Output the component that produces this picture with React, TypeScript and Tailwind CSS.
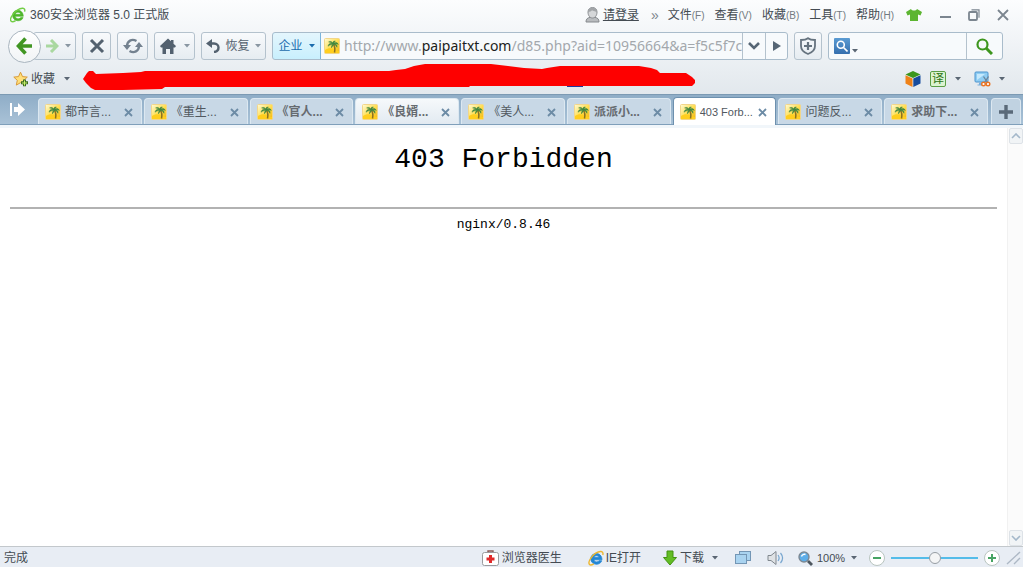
import React, { useState } from 'react';

const menus = [
  { label: '文件', key: 'F' },
  { label: '查看', key: 'V' },
  { label: '收藏', key: 'B' },
  { label: '工具', key: 'T' },
  { label: '帮助', key: 'H' },
];

interface Tab {
  title: string;
  state?: 'active' | 'hover';
  unread?: boolean;
}

const tabs: Tab[] = [
  { title: '都市言...' },
  { title: '《重生...' },
  { title: '《官人...', unread: true },
  { title: '《良婿...', unread: true, state: 'hover' },
  { title: '《美人...' },
  { title: '派派小...', unread: true },
  { title: '403 Forb...', state: 'active' },
  { title: '问题反...' },
  { title: '求助下...', unread: true },
];

const toolButton =
  'flex h-7 shrink-0 items-center justify-center rounded-[3px] border border-[#b4c2cd] bg-linear-to-b from-[#f8fafc] to-[#e6ecf1] text-[#53616f]';

const Caret = ({ className = 'text-[#5a6673]' }: { className?: string }) => (
  <svg className={`shrink-0 ${className}`} width="6" height="4" viewBox="0 0 6 4" fill="currentColor" aria-hidden="true">
    <path d="M0 0h6L3 3.6z" />
  </svg>
);

const PalmIcon = () => (
  <svg className="shrink-0" width="16" height="16" viewBox="0 0 16 16" aria-hidden="true">
    <defs>
      <linearGradient id="sand" x1="0" y1="0" x2="1" y2="1">
        <stop offset="0" stopColor="#fffbd8" />
        <stop offset=".5" stopColor="#ffdf55" />
        <stop offset="1" stopColor="#f3b50c" />
      </linearGradient>
    </defs>
    <rect x=".5" y=".5" width="15" height="15" rx="1" fill="url(#sand)" stroke="#f2d68a" />
    <path d="M1 12c3-2 6-2 9-1 2 .8 3 2 5 2v2H1z" fill="#ffce1f" />
    <path d="M9.4 6c1.600 2.500 1.800 5 1.100 8.500" fill="none" stroke="#8a7224" strokeWidth="1.500" />
    <path d="M9 5.800C6.500 4.500 4.600 5.800 4 8.200c1.700-1.200 3.200-1.500 5-2.100-1 1-1.700 2-1.600 3.700C8.500 8.600 9.200 7.500 9.500 6.200c1.500.4 2.600 1.400 3.500 3.100.5-2-.6-3.300-2.300-3.600 1.300-.2 2.500 0 3.600.8-.5-2-2.600-2.500-4.500-1.400.2-.9.800-1.500 1.600-1.900C9.700 2.700 8.900 3.600 8.900 5 7.900 3.400 6.100 2.900 4.600 3.900 6.400 4.100 7.800 4.700 9 5.800z" fill="#3f8741" stroke="#3f8741" strokeWidth=".5" />
  </svg>
);

const BrowserLogo = () => (
  <svg width="16" height="16" viewBox="0 0 16 16" fill="none" aria-hidden="true">
    <path d="M13.300 9.300H5.200c.2 2.700 4.300 3.200 5.400 1.300h2.500C11.500 15.500 2.600 14.800 2.600 8.300c0-6.500 10.500-7.200 10.700 1zM5.300 7.300h5.300c-.3-2.700-4.700-2.900-5.300 0z" fill="#4eb62b" stroke="#4eb62b" strokeWidth=".6" />
    <path d="M14.600 4.600C15.900.2 11 .6 7.400 3 2.300 6.500-.8 12.400 1.200 14.300c.9.9 2.800.3 4.400-.7" stroke="#72ce45" strokeWidth="1.400" />
  </svg>
);

const UserIcon = () => (
  <svg width="15" height="16" viewBox="0 0 15 16" aria-hidden="true">
    <path d="M1 15c0-3 1.500-4.200 4-4.600h5c2.500.4 4 1.600 4 4.600z" fill="#b9bcbf" stroke="#85898d" />
    <path d="M3 5c0-6 9-6 9 0 0 8-9 8-9 0z" fill="#d5d7d9" stroke="#898c90" />
    <path d="M3 5C3-1 12-1 12 5 9.500 4.500 8 3.600 7 3.200 6.200 4.200 5 4.700 3 5z" fill="#a2a5a8" />
  </svg>
);

const ShirtIcon = () => (
  <svg width="16" height="14" viewBox="0 0 16 14" aria-hidden="true">
    <path d="M5 1 0 4l1.500 3.500L4 6.500V13h8V6.500l2.500 1L16 4l-5-3C10 3 6 3 5 1z" fill="#5cb531" />
  </svg>
);

const StarIcon = () => (
  <svg width="16" height="16" viewBox="0 0 16 16" aria-hidden="true">
    <path d="m7.500 1.200 2 4.400 4.800.5-3.600 3.200 1.100 4.800-4.300-2.400-4.200 2.400 1-4.800L.8 6.100l4.700-.5z" fill="#ffdf7a" stroke="#d99b3a" strokeLinejoin="round" />
    <path d="M10 8.500h3V10.300h2v3h-2v2h-3v-2H8v-3h2z" fill="#3d6e20" />
    <path d="M11 9.500h1v2h2v1h-2v2h-1v-2H9v-1h2z" fill="#c9f06a" />
  </svg>
);

const CubeIcon = () => (
  <svg width="16" height="16" viewBox="0 0 16 16" aria-hidden="true">
    <path d="M8 0 15.500 3.500 8 7 .5 3.500z" fill="#3c961c" />
    <path d="M.5 4.200 7.500 7.500V16l-7-3.500z" fill="#ef8218" />
    <path d="M15.500 4.200 8.300 7.500V16l7.200-3.500z" fill="#174c9d" />
  </svg>
);

const CaptureIcon = () => (
  <svg width="17" height="16" viewBox="0 0 17 16" aria-hidden="true">
    <rect x="1" y="1" width="13" height="10" rx="1" fill="#8fcdf3" stroke="#4c94ce" />
    <path d="M3 9V3h8z" fill="#c5e9fd" />
    <path d="M5 11.500h4v2h1.500v1h-7v-1H5z" fill="#78aedb" />
    <path d="m9.500 5.500 4 6M14.500 5.500l-4 6" stroke="#6c8499" strokeWidth="1.300" />
    <circle cx="9.500" cy="13" r="1.800" fill="#fff" stroke="#ea7423" strokeWidth="1.400" />
    <circle cx="14" cy="13" r="1.800" fill="#fff" stroke="#ea7423" strokeWidth="1.400" />
  </svg>
);

const IeIcon = () => (
  <svg width="16" height="16" viewBox="0 0 16 16" fill="none" aria-hidden="true">
    <path d="M14 9.800H6c.2 2.500 3.900 2.900 5 1h2.700C12 16 2.800 15.300 2.800 8.800 2.800 2 13.900 1.300 14 9.800zM6 7.600h4.900c-.3-2.300-4.200-2.500-4.900 0z" fill="#2386d4" stroke="#2386d4" strokeWidth=".8" />
    <path d="M14.800 5C15.900.6 11.500.8 7.700 3.200 3 6.300-.4 12.500 1.500 14.400c.9.900 2.700.4 4.200-.6" stroke="#edb72f" strokeWidth="1.400" />
  </svg>
);

const TitleBar = () => (
  <header className="flex h-[30px] items-center pr-[14px] pl-[10px] text-[#444b52]">
    <BrowserLogo />
    <h1 className="ml-1 whitespace-nowrap">360安全浏览器 5.0 正式版</h1>
    <div className="ml-auto flex items-center whitespace-nowrap">
      <UserIcon />
      <a href="#login" className="ml-[3px] underline">请登录</a>
      <span className="mr-[9px] ml-3 text-sm text-[#7c858d]">»</span>
      <nav className="flex gap-[10px]">
        {menus.map((menu) => (
          <button key={menu.key} type="button">
            {menu.label}
            <span className="text-[10px] text-[#737a81]">({menu.key})</span>
          </button>
        ))}
      </nav>
      <button type="button" aria-label="皮肤" className="ml-3"><ShirtIcon /></button>
      <div className="ml-[17px] flex items-center gap-[17px] text-[#7b858f]">
        <button type="button" aria-label="最小化">
          <svg width="12" height="12" viewBox="0 0 12 12"><path d="M1 8h11" stroke="currentColor" strokeWidth="2" /></svg>
        </button>
        <button type="button" aria-label="还原">
          <svg width="12" height="12" viewBox="0 0 12 12" fill="none" stroke="currentColor">
            <rect x="1" y="3" width="8" height="8" rx="1" strokeWidth="1.800" />
            <path d="M3.500.8H11v8" strokeWidth="1.200" />
          </svg>
        </button>
        <button type="button" aria-label="关闭">
          <svg width="12" height="12" viewBox="0 0 12 12"><path d="m1 1 10 10M11 1 1 11" stroke="currentColor" strokeWidth="1.800" /></svg>
        </button>
      </div>
    </div>
  </header>
);

const AddressBar = () => {
  const [editing, setEditing] = useState(false);
  const [url, setUrl] = useState('http://www.paipaitxt.com/d85.php?aid=10956664&a=f5c5f7c');
  const host = 'paipaitxt.com';
  const [before, after] = url.split(host);

  return (
    <div className="flex h-7 min-w-0 flex-1 overflow-hidden rounded-[3px] border border-[#a9bccb] bg-[#f7fafc]">
      <button type="button" className="-my-px -ml-px flex w-[49px] shrink-0 items-center justify-center gap-[6px] rounded-l-[3px] border border-[#7bb5dc] bg-linear-to-b from-[#e4f6fd] to-[#c8effd] text-[#1b6cad]">
        企业
        <Caret className="text-[#1b6cad]" />
      </button>
      <div className="flex min-w-0 flex-1 items-center gap-1 pl-[3px]">
        <PalmIcon />
        <div className="relative h-full min-w-0 flex-1 overflow-hidden font-['Noto_Sans'] text-[14px] leading-[26px] whitespace-nowrap text-[#a3a8ad]">
          {!editing && (
            <span>
              {before}
              {after !== undefined && <span className="text-[#1c1e20]">{host}</span>}
              {after}
            </span>
          )}
          <input
            type="text"
            aria-label="地址"
            className="absolute inset-0 w-full bg-transparent text-[#1c1e20] outline-none"
            value={editing ? url : ''}
            onFocus={() => setEditing(true)}
            onBlur={() => setEditing(false)}
            onChange={(e) => setUrl(e.target.value)}
          />
        </div>
      </div>
      <button type="button" aria-label="历史地址" className="flex w-[23px] shrink-0 items-center justify-center border-l border-[#b4c2cd] text-[#566675]">
        <svg width="12" height="8" viewBox="0 0 12 8" fill="none"><path d="m1 1 5 5 5-5" stroke="currentColor" strokeWidth="2.600" /></svg>
      </button>
      <button type="button" aria-label="转到" className="flex w-[22px] shrink-0 items-center justify-center border-l border-[#b4c2cd] text-[#566675]">
        <svg width="8" height="10" viewBox="0 0 8 10" fill="currentColor"><path d="M0 0v10l8-5z" /></svg>
      </button>
    </div>
  );
};

const Toolbar = () => (
  <div className="flex h-8 items-center gap-[6px] pr-5 pl-2">
    <div className="flex shrink-0 items-center">
      <button type="button" aria-label="后退" className="z-10 flex size-[33px] items-center justify-center rounded-full border border-[#aab6c0] bg-linear-to-b from-white to-[#f1f4f6]">
        <svg width="17" height="18" viewBox="0 0 17 18" fill="none"><path d="M9.500 1.500 2.500 9l7 7.500M3 9h13" stroke="#419623" strokeWidth="3.600" /></svg>
      </button>
      <button type="button" aria-label="前进" className={`${toolButton} -ml-2 w-[43px] gap-[6px] pl-[6px]`}>
        <svg width="14" height="14" viewBox="0 0 14 14" fill="none"><path d="m6 1 6 6-6 6M12 7H1" stroke="#a9d8a0" strokeWidth="3" /></svg>
        <Caret className="text-[#8996a2]" />
      </button>
    </div>
    <button type="button" aria-label="停止" className={`${toolButton} w-[29px]`}>
      <svg width="16" height="16" viewBox="0 0 16 16"><path d="m2 2 12 12M14 2 2 14" stroke="currentColor" strokeWidth="3" /></svg>
    </button>
    <button type="button" aria-label="刷新" className={`${toolButton} w-[31px]`}>
      <svg width="20" height="18" viewBox="0 0 20 18" fill="none">
        <path d="M4 9.500C4 3.500 9 1.500 13.500 4M16 8.500c0 6-5 8-9.500 5.500" stroke="#73818f" strokeWidth="2.400" />
        <path d="M0 8h8l-4 5zM20 10h-8l4-5z" fill="#73818f" />
      </svg>
    </button>
    <button type="button" aria-label="主页" className={`${toolButton} w-[41px] gap-2`}>
      <svg width="16" height="16" viewBox="0 0 16 16" fill="currentColor"><path d="M8 .5 0 8l1 1.500h1.500V16H6v-5h4v5h3.500V9.500H15L16 8l-2.500-2.300V2H11v1.300z" /></svg>
      <Caret className="text-[#8996a2]" />
    </button>
    <button type="button" className={`${toolButton} w-[65px] gap-[5px]`}>
      <svg width="14" height="14" viewBox="0 0 14 14" fill="none">
        <path d="M4 4.500h4c6 0 6 8 0 8.500" stroke="currentColor" strokeWidth="2.400" />
        <path d="M6 0v9L0 4.500z" fill="currentColor" />
      </svg>
      恢复
      <Caret className="text-[#8996a2]" />
    </button>
    <AddressBar />
    <button type="button" aria-label="安全" className={`${toolButton} w-7`}>
      <svg width="18" height="18" viewBox="0 0 18 18" fill="none" stroke="#66737f" strokeWidth="1.800">
        <path d="M9 1.200C7 2.800 4.500 3 2 3v6c0 4 3 6.500 7 8 4-1.500 7-4 7-8V3c-2.500 0-5-.2-7-1.800z" />
        <path d="M9 5v8M5 9h8" strokeWidth="2.200" />
      </svg>
    </button>
    <div className="flex h-7 w-[175px] shrink-0 overflow-hidden rounded-[3px] border border-[#a9bccb] bg-[#f7fafc]">
      <button type="button" aria-label="搜索引擎" className="ml-[5px] flex items-center">
        <span className="flex size-4 items-center justify-center rounded-[1px] bg-linear-to-b from-[#5a9bd3] to-[#356fae]">
          <svg width="12" height="12" viewBox="0 0 12 12" fill="none" stroke="#fff" strokeWidth="1.600"><circle cx="4.800" cy="4.800" r="3.500" /><path d="m7.500 7.500 4 4" /></svg>
        </span>
        <span className="mt-[10px] ml-[2px]"><Caret /></span>
      </button>
      <input type="text" aria-label="搜索" className="min-w-0 flex-1 bg-transparent px-1 outline-none" />
      <button type="button" aria-label="开始搜索" className="flex w-9 items-center justify-center border-l border-[#b4c2cd]">
        <svg width="17" height="17" viewBox="0 0 17 17" fill="none" stroke="#3d961e"><circle cx="6.500" cy="6.500" r="5" strokeWidth="2.200" /><path d="m10 10 6 6" strokeWidth="3" /></svg>
      </button>
    </div>
  </div>
);

const FavoritesBar = () => (
  <div className="flex h-8 items-center pt-px pr-[18px] pl-[13px] text-[#444b52]">
    <button type="button" className="flex items-center gap-[2px]">
      <StarIcon />
      收藏
      <span className="ml-[7px]"><Caret /></span>
    </button>
    <svg className="ml-[13px] shrink-0" width="612" height="29" viewBox="0 0 612 29" aria-hidden="true">
      <path d="M484 20h16v3h-16z" fill="#20389b" />
      <path
        d="M0 15 4 9 6 7H10L13 10 40 9 58 8 62 7H306L313 6 322 5 331 2 342 0H408L425 2 441 4 459 5 464 4 477 2H556L568 4 574 6 577 9H603L609 13 612 16V19L609 22H387L386 23H82L79 25 40 26H12L8 24 3 19z"
        fill="#fe0000"
      />
    </svg>
    <div className="ml-auto flex items-center">
      <button type="button" aria-label="应用"><CubeIcon /></button>
      <button type="button" className="ml-[9px] flex items-center gap-[9px]">
        <span className="flex size-4 items-center justify-center rounded-[2px] border border-[#5c9f47] bg-[#dcf3d0] leading-[14px] text-[#2e7417]">译</span>
        <Caret />
      </button>
      <button type="button" aria-label="截图" className="ml-[13px] flex items-center gap-2">
        <CaptureIcon />
        <Caret />
      </button>
    </div>
  </div>
);

const TabStrip = () => (
  <div className="flex h-[31px] items-end gap-[3px] border-t border-b border-t-[#7c9ab3] border-b-[#7f9fba] bg-linear-to-b from-[#8fadc7] to-[#a9c2d7] pr-[2px]">
    <button type="button" aria-label="标签列表" className="flex h-full w-[35px] items-center justify-center text-white">
      <svg width="16" height="15" viewBox="0 0 16 15" fill="currentColor"><path d="M0 1h2v13H0zM4 5h4V1l7 6.500L8 14v-4H4z" /></svg>
    </button>
    <div className="flex min-w-0 flex-1 items-end gap-[2px]">
      {tabs.map((tab) => (
        <div
          key={tab.title}
          className={`flex min-w-0 flex-1 items-center rounded-t-[4px] border border-b-0 pt-px pr-2 pl-[6px] ${
            tab.state === 'active'
              ? '-mb-px h-[28px] border-[#6d90ae] bg-white'
              : tab.state === 'hover'
              ? 'h-[26px] border-[#dce8f1] bg-linear-to-b from-[#f6f9fb] to-[#e2eaf1]'
              : 'h-[26px] border-[#dce8f1] bg-[#c8d8e6]'
          }`}
        >
          <button
            type="button"
            className={`flex min-w-0 flex-1 items-center gap-1 overflow-hidden whitespace-nowrap ${
              tab.unread ? 'font-bold text-[#666b70]' : 'text-[#51585f]'
            } ${tab.state === 'active' ? 'text-[11px]' : ''}`}
          >
            <PalmIcon />
            {tab.title}
          </button>
          <button type="button" aria-label={`关闭 ${tab.title}`} className="shrink-0 text-[#6c8ba5]">
            <svg width="9" height="9" viewBox="0 0 9 9"><path d="m1 1 7 7M8 1 1 8" stroke="currentColor" strokeWidth="1.800" /></svg>
          </button>
        </div>
      ))}
    </div>
    <button type="button" aria-label="新建标签" className="flex h-[26px] w-[30px] items-center justify-center rounded-t-[4px] border border-b-0 border-[#dce8f1] bg-[#c0d2e1] text-[#5a6a79]">
      <svg width="14" height="14" viewBox="0 0 14 14"><path d="M7 0v14M0 7h14" stroke="currentColor" strokeWidth="3.400" /></svg>
    </button>
  </div>
);

const scrollButton = 'flex h-4 w-[14px] items-center justify-center rounded-[2px] border border-[#dde2e7] bg-[#f1f4f6] text-[#a4b8ca]';

const PageView = () => (
  <div className="flex min-h-0 flex-1 border-t-[3px] border-[#f1f6fa] bg-white">
    <main className="min-w-0 flex-1 px-[10px] pt-4 text-center font-['Liberation_Mono','Noto_Sans_CJK_SC',monospace] text-black">
      <h2 className="text-[28px] leading-8">403 Forbidden</h2>
      <hr className="mt-[31px] border-t-2 border-[#b2b2b2]" />
      <p className="mt-2 text-[13px] leading-4">nginx/0.8.46</p>
    </main>
    <div className="flex w-4 shrink-0 flex-col items-center justify-between border-l border-[#f1f1f1] bg-[#fbfbfb]">
      <button type="button" aria-label="向上滚动" className={scrollButton}>
        <svg width="10" height="6" viewBox="0 0 10 6" fill="none"><path d="m1 5 4-4 4 4" stroke="currentColor" strokeWidth="1.600" /></svg>
      </button>
      <button type="button" aria-label="向下滚动" className={scrollButton}>
        <svg width="10" height="6" viewBox="0 0 10 6" fill="none"><path d="m1 1 4 4 4-4" stroke="currentColor" strokeWidth="1.600" /></svg>
      </button>
    </div>
  </div>
);

const StatusBar = () => {
  const [zoom, setZoom] = useState(100);

  return (
    <footer className="flex h-[21px] shrink-0 items-center border-t border-[#c3c8cc] bg-[#e8edf4] pt-[2px] pr-[2px] pl-1 whitespace-nowrap text-[#444b52]">
      <span>完成</span>
      <div className="ml-auto flex items-center">
        <button type="button" className="flex items-center gap-[3px]">
          <svg width="17" height="16" viewBox="0 0 17 16">
            <path d="M6 3V1h5v2" fill="none" stroke="#8a5a55" strokeWidth="1.400" />
            <rect x=".5" y="2.500" width="16" height="13" rx="2" fill="#fff" stroke="#9a9c9f" />
            <path d="M7 5h3v2.500h2.500v3H10V13H7v-2.500H4.500v-3H7z" fill="#e02a2a" />
          </svg>
          浏览器医生
        </button>
        <button type="button" className="ml-[26px] flex items-center gap-[2px]">
          <IeIcon />
          IE打开
        </button>
        <button type="button" className="ml-[22px] flex items-center gap-[3px]">
          <svg width="14" height="16" viewBox="0 0 14 16"><path d="M4 1h6v6.500h3.500L7 15 .5 7.500H4z" fill="#63bd25" stroke="#439313" /></svg>
          下载
          <span className="ml-[5px]"><Caret /></span>
        </button>
        <button type="button" aria-label="窗口" className="ml-[17px]">
          <svg width="16" height="14" viewBox="0 0 16 14" fill="#a9d3f0" stroke="#7396b5"><rect x="4.500" y=".5" width="11" height="9" /><rect x=".5" y="3.500" width="11" height="9" /></svg>
        </button>
        <button type="button" aria-label="静音" className="ml-4">
          <svg width="17" height="16" viewBox="0 0 17 16" fill="none">
            <path d="M1 5.500h3L9 1.500v13l-5-4H1z" fill="#dfe2e5" stroke="#81888f" />
            <path d="M11 5c1.500 2 1.500 4 0 6M13.500 3c2.500 3 2.500 7 0 10" stroke="#77a6cf" strokeWidth="1.200" />
          </svg>
        </button>
        <button type="button" className="ml-[14px] flex items-center gap-1">
          <svg width="15" height="15" viewBox="0 0 15 15"><circle cx="6" cy="6" r="5" fill="#5daee9" stroke="#7c8893" strokeWidth="1.400" /><path d="M3.500 5.500C4 3.500 6 3 7.500 3.500" fill="none" stroke="#fff" strokeWidth="1.400" /><path d="m10 10 4 4" stroke="#4d565f" strokeWidth="2.800" /></svg>
          <span className="w-[26px] text-[11px]">{zoom}%</span>
          <span className="ml-1"><Caret /></span>
        </button>
        <button type="button" aria-label="缩小" className="ml-3 flex size-4 items-center justify-center rounded-full border border-[#b9c5c0] bg-white">
          <svg width="8" height="8" viewBox="0 0 8 8"><path d="M0 4h8" stroke="#47a463" strokeWidth="2" /></svg>
        </button>
        <input
          type="range"
          aria-label="缩放"
          min={0}
          max={200}
          value={zoom}
          onChange={(e) => setZoom(Number(e.target.value))}
          className="mx-[6px] h-[2px] w-[87px] appearance-none bg-[#54bce9] [&::-webkit-slider-thumb]:size-3 [&::-webkit-slider-thumb]:appearance-none [&::-webkit-slider-thumb]:rounded-full [&::-webkit-slider-thumb]:border [&::-webkit-slider-thumb]:border-[#969da3] [&::-webkit-slider-thumb]:bg-[#f4f5f6]"
        />
        <button type="button" aria-label="放大" className="flex size-4 items-center justify-center rounded-full border border-[#b9c5c0] bg-white">
          <svg width="8" height="8" viewBox="0 0 8 8"><path d="M0 4h8M4 0v8" stroke="#47a463" strokeWidth="2" /></svg>
        </button>
        <svg className="ml-[6px]" width="15" height="14" viewBox="0 0 15 14" aria-hidden="true"><path d="M1 13 14 1M8 13l6-6" stroke="#adb8c5" strokeWidth="1.400" /></svg>
      </div>
    </footer>
  );
};

const App: React.FC = () => {
  return (
    <div className="flex h-screen flex-col overflow-hidden font-['Liberation_Sans','Noto_Sans_CJK_SC',sans-serif] text-xs text-[#444b52]">
      <div className="shrink-0 bg-linear-to-b from-[#fcfdfe] to-[#e2e8ed]">
        <TitleBar />
        <Toolbar />
        <FavoritesBar />
      </div>
      <TabStrip />
      <PageView />
      <StatusBar />
    </div>
  );
};

export default App;
